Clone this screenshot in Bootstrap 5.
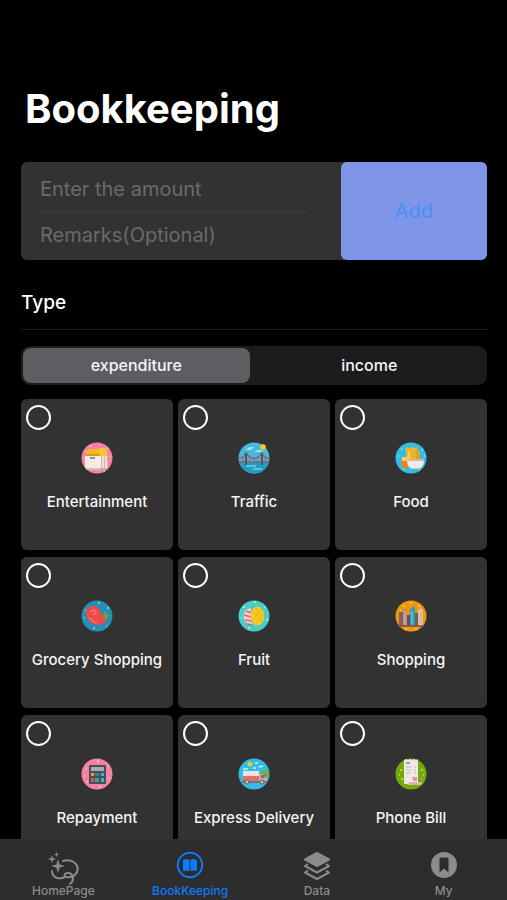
<!DOCTYPE html>
<html lang="en" data-bs-theme="dark">
<head>
<meta charset="utf-8">
<meta name="viewport" content="width=device-width, initial-scale=1">
<title>Bookkeeping</title>
<link href="https://cdn.jsdelivr.net/npm/bootstrap@5.3.0/dist/css/bootstrap.min.css" rel="stylesheet">
<style>
body { background: #000; color: #f5f5f5; font-family: Inter, "Liberation Sans", sans-serif; }
.screen { overflow-y: auto; scrollbar-width: none; padding: 84px 20px 0 21px; }
.screen::-webkit-scrollbar { display: none; }
.page-title { font-size: 40px; line-height: 50px; font-weight: 700; color: #fff; padding-left: 4px; margin-bottom: 28px; }
.entry { background: #323232; border-radius: 6px; height: 98px; margin-bottom: 28px; }
.entry-fields { padding: 4px 35px 0 19px; flex: 320 1 0; min-width: 0; }
.entry-fields input { height: 46px; font-size: 20px; color: #eee; }
.entry-fields input::placeholder { color: #6a6a6c; opacity: 1; }
.entry-fields input:first-of-type { border-bottom: 1px solid #3b3b3d !important; }
.add-btn { flex: 147 1 0; background: #7f95e8; color: #4791f8; font-size: 20px; border-radius: 6px; }
.add-btn:hover { background: #8c9fea; color: #4791f8; }
.type-title { font-size: 19px; line-height: 28px; font-weight: 500; padding-top: 1px; padding-bottom: 12px; margin-bottom: 16px; border-bottom: 1px solid #1b1b1c; }
.segments { background: #1c1c1e; border-radius: 9px; padding: 2px; height: 39px; gap: 4px; margin-bottom: 14px; }
.segments label { flex: 227 1 0; border-radius: 8px; font-size: 16px; line-height: 34px; font-weight: 500; text-align: center; cursor: pointer; }
.segments label.wide { flex-grow: 232; }
.segments input:checked + label { background: #5e5d62; }
.kinds { display: grid; grid-template-columns: repeat(3, 1fr); gap: 7px 5px; }
.kind { background: #323232; border-radius: 6px; height: 151px; padding: 6px 0; cursor: pointer; }
.kind input { appearance: none; width: 25px; height: 25px; border: 2px solid #fff; border-radius: 50%; margin: 0 0 12px 5px; align-self: flex-start; }
.kind input:checked { background: #0a7cff; }
.kind svg { width: 32px; height: 32px; margin-bottom: 18px; }
.kind span { font-size: 15px; line-height: 20px; font-weight: 500; white-space: nowrap; }
.tabs { height: 61px; background: #2d2d2e; border-top: 1px solid #303032; }
.tabs a { color: #8b8b8e; font-size: 12px; line-height: 16px; font-weight: 500; padding-top: 9px; }
.tabs a.current { color: #0a7cff; }
.tabs svg { width: 34px; height: 34px; overflow: visible; }
</style>
<script src="https://cdn.jsdelivr.net/npm/bootstrap@5.3.0/dist/js/bootstrap.bundle.min.js"></script>
</head>
<body>
<div class="vh-100 d-flex flex-column">
<main class="screen flex-fill">
  <h1 class="page-title">Bookkeeping</h1>
  <form class="entry d-flex">
    <div class="entry-fields d-flex flex-column">
      <input class="w-100 border-0 bg-transparent p-0" type="text" inputmode="decimal" placeholder="Enter the amount" aria-label="Amount">
      <input class="w-100 border-0 bg-transparent p-0" type="text" placeholder="Remarks(Optional)" aria-label="Remarks">
    </div>
    <button class="btn add-btn border-0" type="button">Add</button>
  </form>
  <h2 class="type-title">Type</h2>
  <div class="segments d-flex" role="group" aria-label="Type">
    <input class="btn-check" type="radio" name="flow" id="flow-out" checked><label for="flow-out">expenditure</label>
    <input class="btn-check" type="radio" name="flow" id="flow-in"><label class="wide" for="flow-in">income</label>
  </div>
  <div class="kinds">
    <label class="kind d-flex flex-column align-items-center"><input type="radio" name="kind">
      <svg viewBox="0 0 32 32" aria-hidden="true"><circle cx="16" cy="16" r="15.5" fill="#f684a0"/><path d="M5 9l1 1M3 16h1M9 4h1M26 6l1 1M29 15h1M23 29h1" stroke="#ffd0dc" stroke-width="1.5"/><path d="M7 8l2-1h15v7H5V10z" fill="#f5b81d"/><path d="M18 6h6l2 3v6h-8z" fill="#f8c42f"/><path d="M5 12h14v4H5z" fill="#de981c"/><path d="M4 14h16v14H6l-2-3z" fill="#f4ece7"/><path d="M20 14h7v13h-7z" fill="#d9b8a8"/><path d="M22 14v13M25 14v13" stroke="#f5e8dc" stroke-width="1.5"/><path d="M9 16h5" stroke="#8e6c70" stroke-width="1.5"/><path d="M5 27h22" stroke="#b58c88"/></svg>
      <span>Entertainment</span></label>
    <label class="kind d-flex flex-column align-items-center"><input type="radio" name="kind">
      <svg viewBox="0 0 32 32" aria-hidden="true"><circle cx="16" cy="16" r="15.5" fill="#46b9df"/><path d="M7 8l5-3h4l-3 3zM16 10l4-2h5l-2 2zM4 13h6" fill="#a2e4f3"/><circle cx="25" cy="5" r="2.8" fill="#f4cc24"/><path d="M1 20h30a15.500 15.500 0 0 1-30 0z" fill="#219dc4"/><path d="M8 24h10M15 27h9" stroke="#73d0e5" stroke-width="1.5"/><path d="M1 16Q5 17 8 11q8 11 16 0 3 6 7 5M1 20h30" fill="none" stroke="#865f65" stroke-width="1.4"/><path d="M8 11v12M24 11v12" stroke="#704b55" stroke-width="2"/><path d="M5 15v5M12 15v5M16 17v3M20 15v5M27 15v5" stroke="#8b7179" stroke-width=".8"/></svg>
      <span>Traffic</span></label>
    <label class="kind d-flex flex-column align-items-center"><input type="radio" name="kind">
      <svg viewBox="0 0 32 32" aria-hidden="true"><circle cx="16" cy="16" r="15.5" fill="#33bce9"/><path d="M3 14h1M6 7h1M27 8h1M29 14h1M8 27h1M24 28h1" stroke="#b5ecf9" stroke-width="1.5"/><path d="M11 5l3 1 3-1 3 1 2-1v12H11v-8l-1-2z" fill="#efb32b"/><path d="M21 8q4-1 4 3v7h-4z" fill="#dda02a"/><path d="M14 9v8" stroke="#f9cf5c" stroke-width="2"/><path d="M6 16h7v10H7z" fill="#e98528"/><path d="M7 15h6v4H7z" fill="#f9cc66"/><path d="M12 18h17q0 8-6 9h-6q-5-2-5-9z" fill="#eeece9"/><path d="M12 19h17l-1-2H13z" fill="#d3b99d"/><path d="M15 27h10" stroke="#a89d97"/></svg>
      <span>Food</span></label>
    <label class="kind d-flex flex-column align-items-center"><input type="radio" name="kind">
      <svg viewBox="0 0 32 32" aria-hidden="true"><circle cx="16" cy="16" r="15.5" fill="#258db7"/><path d="M17 3h2M4 10h1M3 18h1M12 28h2M26 8h2M25 26h1" stroke="#a0dced" stroke-width="1.7"/><path d="M5 14C4 7 12 3 17 8c3 3 2 6 5 7 4 0 5 4 2 7-5 6-18 2-19-8z" fill="#ee4a49"/><path d="M10 12q3-4 5 0 0 3-3 2M8 17q4 6 9 6" fill="none" stroke="#f98173" stroke-width="1.200"/><path d="M22 16l2-5 2 3 4 1-3 2-1 3z" fill="#67a642"/></svg>
      <span>Grocery Shopping</span></label>
    <label class="kind d-flex flex-column align-items-center"><input type="radio" name="kind">
      <svg viewBox="0 0 32 32" aria-hidden="true"><circle cx="16" cy="16" r="15.5" fill="#45cdc8"/><path d="M5 7h2M3 18h1M10 28h2M26 7h1M28 20h2M16 2h2" stroke="#bdf5ed" stroke-width="1.7"/><path d="M13 8Q4 9 6 19q2 6 8 6z" fill="#f2cbd0"/><path d="M8 11l6 2M6 15l7 2M7 20l7 1M9 24l5 1" stroke="#d7657f" stroke-width="1.5"/><ellipse cx="19.500" cy="16" rx="6.800" ry="9.500" fill="#f5cb22"/><path d="M15 12l9 10M18 8l7 9M23 9l-8 12M25 14l-7 10" stroke="#dda51b" stroke-width=".8" stroke-dasharray="2 1"/></svg>
      <span>Fruit</span></label>
    <label class="kind d-flex flex-column align-items-center"><input type="radio" name="kind">
      <svg viewBox="0 0 32 32" aria-hidden="true"><circle cx="16" cy="16" r="15.5" fill="#ed970f"/><path d="M8 6h2M15 3h2M23 6h2M5 10h1M10 29h2M20 29h2" stroke="#ffd569" stroke-width="1.5"/><path d="M4 12h4v14H4z" fill="#87605a"/><path d="M8 9h4v17H8z" fill="#bc8f83"/><path d="M12 15h4v11h-4z" fill="#684f66"/><path d="M15 9l5-3v20h-5z" fill="#30a1b2"/><path d="M20 13h3v13h-3z" fill="#79584f"/><path d="M23 10l3-2 2 3v15h-5z" fill="#dbc1ad"/><path d="M17 11v13" stroke="#86d5d8"/><path d="M26 12v12M10 11v13" stroke="#cfaea0"/><path d="M3 26h26" stroke="#834f36" stroke-width="1.5"/></svg>
      <span>Shopping</span></label>
    <label class="kind d-flex flex-column align-items-center"><input type="radio" name="kind">
      <svg viewBox="0 0 32 32" aria-hidden="true"><circle cx="16" cy="16" r="15.5" fill="#f383a4"/><path d="M16 3h2M5 10h1M3 18h1M6 24h1M27 8h1M28 20h1M18 29h2" stroke="#ffd6df" stroke-width="1.7"/><rect x="8" y="7" width="17" height="19" rx="1" fill="#4b4b59"/><path d="M10 9h13v4H10z" fill="#a3adb5"/><path d="M10 15h3v3h-3z" fill="#dea92e"/><path d="M10 20h3v4h-3z" fill="#d75252"/><path d="M14 15h4v3h-4z" fill="#3f79b8"/><path d="M14 20h4v4h-4z" fill="#49a66a"/><path d="M20 15h3v3h-3zM20 20h3v4h-3z" fill="#38bbc0"/></svg>
      <span>Repayment</span></label>
    <label class="kind d-flex flex-column align-items-center"><input type="radio" name="kind">
      <svg viewBox="0 0 32 32" aria-hidden="true"><circle cx="16" cy="16" r="15.5" fill="#34bce8"/><circle cx="12" cy="6" r="2.5" fill="#e7cd38"/><path d="M5 11h5M15 10h3M21 9l4-1M17 5h3" stroke="#c4f1fb" stroke-width="1.500"/><circle cx="27" cy="16" r="4" fill="#78ad32"/><path d="M26 17h2v6h-2z" fill="#755436"/><path d="M5 13h16v10H5z" fill="#f1e1dc"/><path d="M5 18h16v5H5z" fill="#e56f68"/><path d="M21 16h4l4 4v4h-8z" fill="#d4a79d"/><path d="M23 17h3l1 3h-4z" fill="#5a8092"/><path d="M4 24h25" stroke="#755d64" stroke-width="1.5"/><circle cx="9" cy="24" r="2" fill="#d5c5c1" stroke="#655762"/><circle cx="24" cy="24" r="2" fill="#d5c5c1" stroke="#655762"/></svg>
      <span>Express Delivery</span></label>
    <label class="kind d-flex flex-column align-items-center"><input type="radio" name="kind">
      <svg viewBox="0 0 32 32" aria-hidden="true"><circle cx="16" cy="16" r="15.5" fill="#73a90c"/><path d="M5 12h2M4 17h1M6 21h2M26 12h2M28 17h1M26 21h1" stroke="#c5e56a" stroke-width="1.5"/><path d="M9 2l2-1 2 1 2-1 2 1 2-1 2 1 2-1v24l-11 1H9z" fill="#eee9e6"/><path d="M14 24h13q0 3-3 3H12q2-1 2-3z" fill="#d0b9ae"/><path d="M11 5h4" stroke="#7887a0" stroke-width="1.5"/><path d="M11 9h5M11 12h5M11 15h5M19 9h2M19 12h2M19 15h2" stroke="#bcbcc7"/><path d="M17 20h5M18 22h4" stroke="#e67584" stroke-width="1.5"/></svg>
      <span>Phone Bill</span></label>
  </div>
</main>
<nav class="tabs d-flex flex-shrink-0" aria-label="Main">
  <a href="#" class="col d-flex flex-column align-items-center text-decoration-none">
    <svg viewBox="0 0 34 34" fill="none" stroke="currentColor" stroke-width="2" stroke-linecap="round" aria-hidden="true"><path d="M17 12Q24 10 29 14q4 4 2 9-2 4-7 5c-3 1-7-1-5-3 3-3 8 0 8 4q0 4-3 6M6 22q0 5 5 7 4 1 8-1"/><path d="M12 10l1.600 5.400L19 17l-5.400 1.600L12 24l-1.600-5.400L5 17l5.400-1.600zM6 6l1 3 3 1-3 1-1 3-1-3-3-1 3-1zM10.500 3l.7 1.800 1.800.7-1.800.7-.7 1.800-.7-1.800-1.800-.7 1.800-.7z" fill="currentColor" stroke="none"/></svg>HomePage</a>
  <a href="#" class="current col d-flex flex-column align-items-center text-decoration-none" aria-current="page">
    <svg viewBox="0 0 34 34" aria-hidden="true"><circle cx="17" cy="16" r="12.200" fill="none" stroke="currentColor" stroke-width="2"/><path d="M10 11q4-2 6.500 0v11q-3-1-6.500 0zM17.500 11q3-2 6.500 0v11q-4-1-6.500 0z" fill="currentColor"/></svg>BookKeeping</a>
  <a href="#" class="col d-flex flex-column align-items-center text-decoration-none">
    <svg viewBox="0 0 34 34" fill="none" stroke="currentColor" stroke-width="2" stroke-linejoin="round" aria-hidden="true"><path d="M17 4l12 6.500L17 17 5 10.500z" fill="currentColor"/><path d="M8 15l-3 2 12 6.500L29 17l-3-2M8 21.500l-3 2L17 30l12-6.500-3-2"/></svg>Data</a>
  <a href="#" class="col d-flex flex-column align-items-center text-decoration-none">
    <svg viewBox="0 0 34 34" aria-hidden="true"><circle cx="17" cy="16" r="13" fill="currentColor"/><path d="M12.500 10q0-1.500 1.500-1.500h6q1.500 0 1.500 1.500v13.500L17 19.500l-4.500 4z" fill="#2d2d2e"/></svg>My</a>
</nav>
</div>
</body>
</html>
